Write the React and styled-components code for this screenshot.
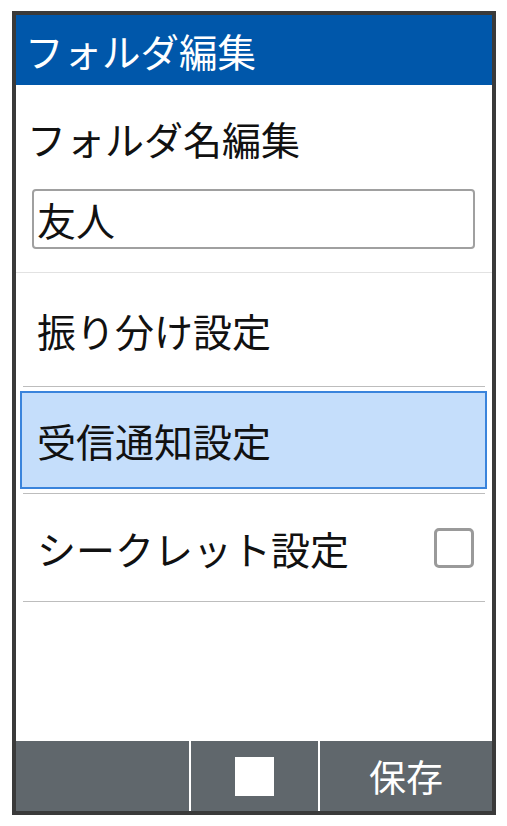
import React from 'react';
import styled, { createGlobalStyle } from 'styled-components';

const blue = '#0057aa';
const barColor = '#60676c';
const lineColor = '#bdbdbd';
const textColor = '#111';

const GlobalStyle = createGlobalStyle`
  html, body {
    margin: 0;
    padding: 0;
    background: #fff;
  }
  body {
    font-family: "Noto Sans CJK JP", "Noto Sans", sans-serif;
  }
`

const Frame = styled.div`
  width: 484px;
  height: 804px;
  margin: 11px 0 0 12px;
  border: 4px solid #3a3a3a;
  box-sizing: border-box;
  display: flex;
  flex-direction: column;
  background: #fff;
  overflow: hidden;
`

const Header = styled.div`
  height: 70px;
  flex: none;
  display: flex;
  align-items: center;
  padding-left: 9px;
  background: ${blue};
  color: #fff;
  font-size: 38.5px;
  line-height: 1;
`

const NameSection = styled.div`
  flex: none;
  display: flex;
  flex-direction: column;
  padding: 30px 17px 23px 16px;
  border-bottom: 1px solid #e2e2e2;
`

const Label = styled.div`
  height: 46px;
  display: flex;
  align-items: center;
  margin-left: -5px;
  font-size: 39px;
  color: ${textColor};
`

const NameInput = styled.div`
  margin-top: 28px;
  height: 60px;
  box-sizing: border-box;
  border: 2px solid #a0a0a0;
  border-radius: 4px;
  display: flex;
  align-items: center;
  padding-left: 3px;
  font-size: 39px;
  color: ${textColor};
`

const Row = styled.div`
  flex: none;
  height: ${props => props.height}px;
  margin: 0 7px;
  display: flex;
  align-items: center;
  justify-content: space-between;
  padding: 0 11px 0 14px;
  border-bottom: 1px solid ${lineColor};
  font-size: 39px;
  color: ${textColor};
`

const FocusWrap = styled.div`
  flex: none;
  padding: 4px 0;
  margin: 0 7px;
  border-bottom: 1px solid ${lineColor};
`

const FocusItem = styled.div`
  height: 98px;
  box-sizing: border-box;
  margin: 0 -2px 0 -3px;
  border: 2px solid #3a84dc;
  background: #c5defb;
  display: flex;
  align-items: center;
  padding-left: 15px;
  font-size: 39px;
  color: ${textColor};
`

const Checkbox = styled.div`
  width: 40px;
  height: 40px;
  box-sizing: border-box;
  border: 3px solid #9a9a9a;
  border-radius: 5px;
`

const Spacer = styled.div`
  flex: 1;
`

const Footer = styled.div`
  flex: none;
  height: 70px;
  display: grid;
  grid-template-columns: 173px 129px 1fr;
  background: ${barColor};
`

const SoftKey = styled.div`
  display: flex;
  align-items: center;
  justify-content: center;
  color: #fff;
  font-size: 37px;
  border-left: ${props => (props.first ? 'none' : '2px solid #fff')};
`

const CenterSquare = styled.div`
  width: 39px;
  height: 39px;
  background: #fff;
`

export default function App() {
  return (
    <>
      <GlobalStyle />
      <Frame>
        <Header>フォルダ編集</Header>
        <NameSection>
          <Label>フォルダ名編集</Label>
          <NameInput>友人</NameInput>
        </NameSection>
        <Row height={113}>振り分け設定</Row>
        <FocusWrap>
          <FocusItem>受信通知設定</FocusItem>
        </FocusWrap>
        <Row height={107}>
          <span>シークレット設定</span>
          <Checkbox />
        </Row>
        <Spacer />
        <Footer>
          <SoftKey first />
          <SoftKey>
            <CenterSquare />
          </SoftKey>
          <SoftKey>保存</SoftKey>
        </Footer>
      </Frame>
    </>
  );
}
